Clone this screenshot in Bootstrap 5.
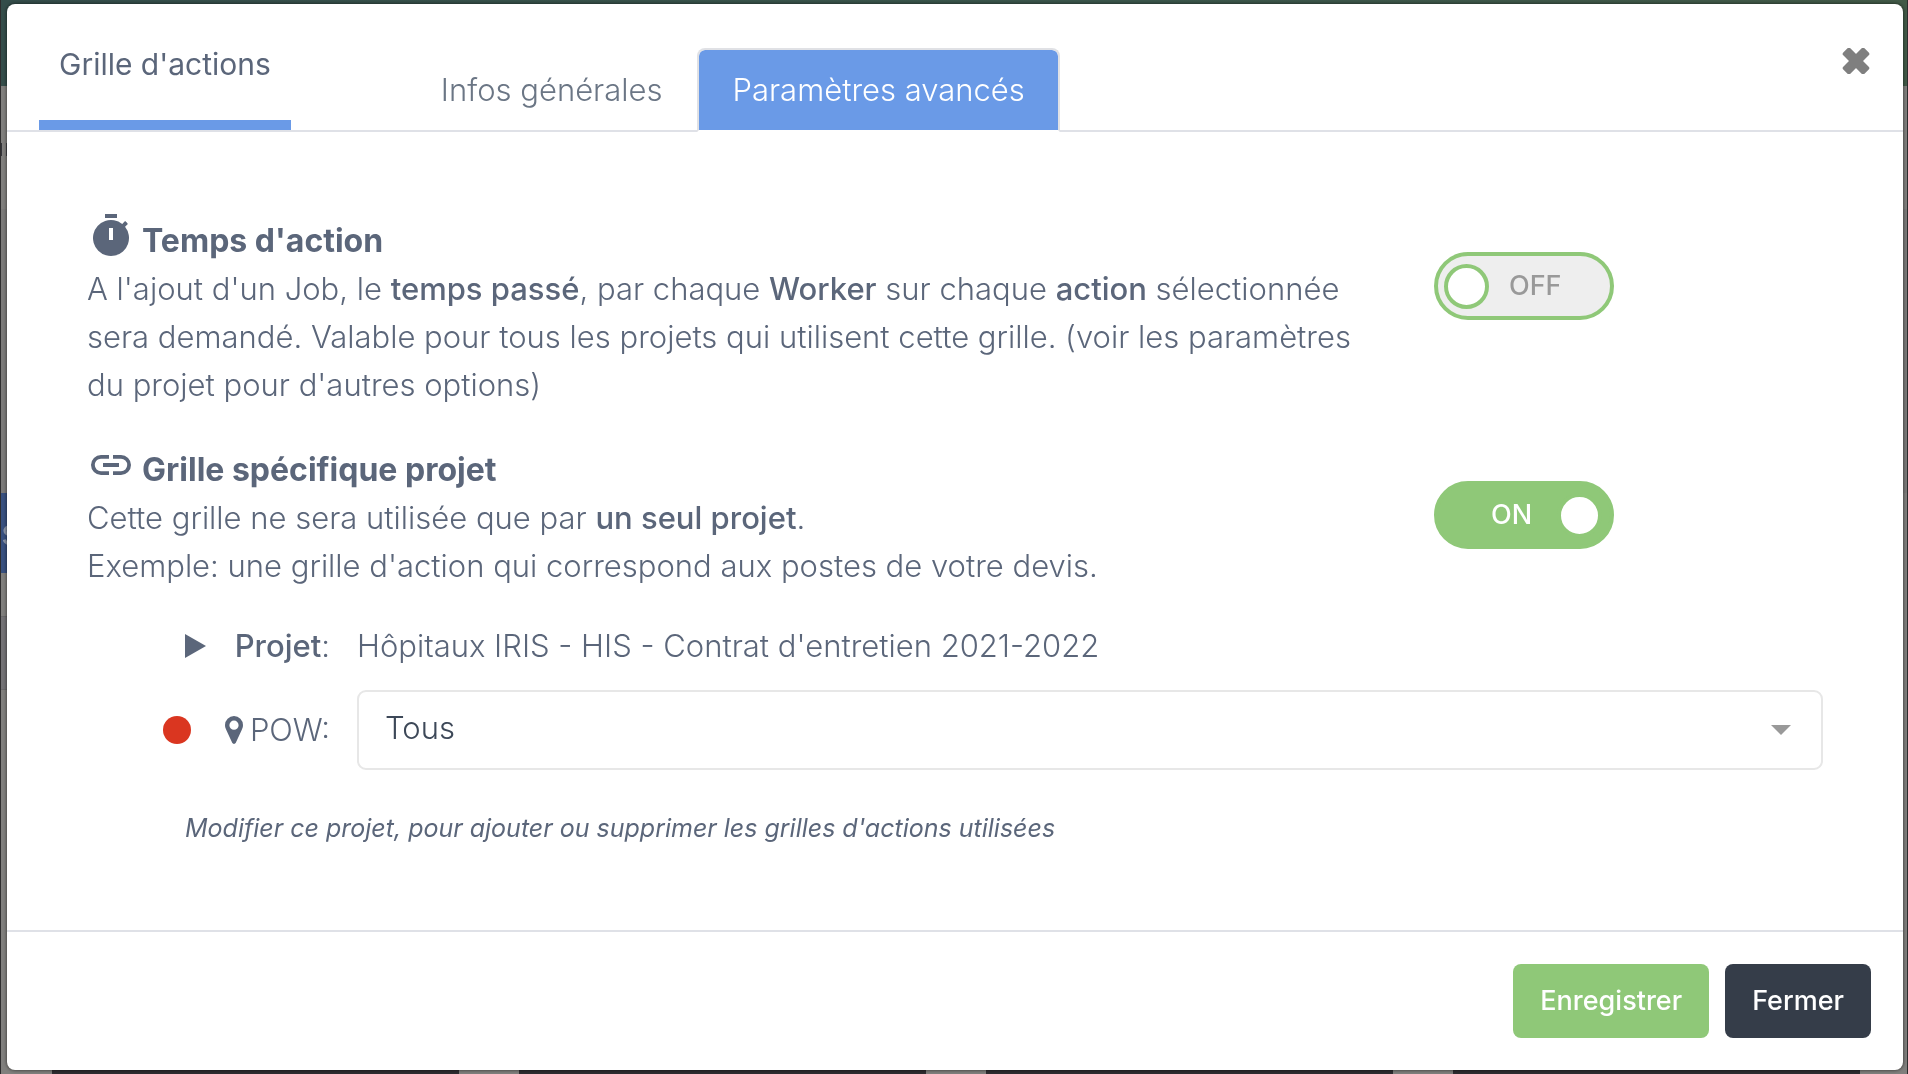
<!DOCTYPE html>
<html lang="fr">
<head>
<meta charset="utf-8">
<meta name="viewport" content="width=device-width, initial-scale=1">
<title>Grille d'actions</title>
<link href="https://cdn.jsdelivr.net/npm/bootstrap@5.3.0/dist/css/bootstrap.min.css" rel="stylesheet">
<style>
  :root { --ink: #5b667a; --blue: #6a9ae7; --green: #8fc878; --dark: #353d49; --rule: #dfe1e7; }
  body { font-family: Inter, "Liberation Sans", sans-serif; font-size: 31px; font-weight: 300; line-height: 48px; color: var(--ink); background: #807f7d; }

  /* dimmed page behind the dialog */
  .backdrop-page { position: fixed; inset: 0; z-index: -1; overflow: hidden; border: solid #2e2d2e; border-width: 0 1px; }
  .page-top { height: 86px; background: linear-gradient(90deg, #344d4a, #3b564b 60%, #425a47); }
  .page-title { height: 123px; }
  .page-mark { width: 8px; height: 13px; margin-top: 57px; background: linear-gradient(90deg, #33343a 1px, transparent 1px 5px, #44454a 5px); }
  .page-space { height: 284px; background: #7b7a79; }
  .page-blue { height: 80px; width: 50%; font-size: 36px; font-weight: 400; line-height: 78px; background: #38507f; color: #8b95a8; }
  .page-row { height: 74px; margin-top: 43px; width: 50%; background: #737275; border: solid #6a696b; border-width: 1px 0; }
  .page-tiles { position: absolute; inset: auto 0 0 51px; height: 10px; background: repeating-linear-gradient(90deg, #2e2c30 0 407px, transparent 407px 467px); }

  .dialog-frame { min-height: 100vh; padding: 4px 5px 4px 7px; }
  .dialog-box { border: 0; border-radius: 8px; color: inherit; background: #fff; box-shadow: 0 0 3px 1px rgba(0,0,0,.4); }
  .dialog-head { border-bottom: 2px solid var(--rule); padding: 36px 32px 0; height: 128px; }
  .dialog-title { font-size: 30px; font-weight: 400; line-height: 48px; padding: 0 20px 32px; border-bottom: 10px solid var(--blue); }
  .dialog-tabs { border: 0; margin: 8px 0 -2px 115px; align-self: flex-start; }
  .dialog-tabs .nav-link { padding: 16px 33px; border: 2px solid transparent; border-radius: 8px 8px 0 0; color: #6b7685; margin: 0; line-height: 48px; background-clip: padding-box; }
  .dialog-tabs .nav-link.active { color: #fff; background-color: var(--blue); border-color: #e0e1e5; border-bottom-color: #fff; }
  .close-btn { border: 0; background: none; padding: 0; line-height: 0; margin-top: 8px; color: #7f7f7f; }

  .dialog-main { padding: 85px 80px 40px; }
  .option-row { display: grid; grid-template-columns: 1fr 389px; column-gap: 66px; }
  .option-row + .option-row { margin-top: 37px; }
  .option-row h2 { display: flex; align-items: flex-start; gap: 7px; height: 48px; margin: 0; font-size: 32px; font-weight: 700; line-height: 48px; }
  .option-row h2 svg { margin-top: -5px; flex: none; }
  .option-row p { margin: 0; }
  b { font-weight: 500; }

  .toggle { display: flex; align-items: center; width: 180px; height: 68px; margin-top: 35px; padding: 0 6px; border: 4px solid var(--green); border-radius: 34px; background: #eee; color: #999; font-size: 27px; font-weight: 500; }
  .toggle input { appearance: none; width: 45px; height: 45px; margin: 0; border: 4px solid var(--green); border-radius: 50%; background: #fff; }
  .toggle .state { margin-left: 20px; }
  .toggle.is-on { flex-direction: row-reverse; justify-content: space-between; padding-right: 8px; background: var(--green); color: #fff; }
  .toggle.is-on .state { margin-left: 47px; }

  .project-grid { display: grid; grid-template-columns: 119px 124px 1fr; row-gap: 20px; align-items: center; margin-top: 32px; }
  .project-grid .value { margin-left: 27px; }
  .marker, .field-name { display: flex; justify-content: flex-end; align-items: center; }
  .field-name { gap: 7px; }
  .red-dot { width: 28px; height: 28px; margin-right: 15px; border-radius: 50%; background: #da3620; }
  .pow-select { width: auto; height: 80px; padding: 0 26px 3px; border: 2px solid #e7e7e7; border-radius: 9px; color: #3d4858; font-size: 31px; font-weight: 300; background: #fff url("data:image/svg+xml,%3Csvg xmlns='http://www.w3.org/2000/svg' viewBox='0 0 20 10'%3E%3Cpath fill='%23999' d='M0 0h20L10 10z'/%3E%3C/svg%3E") no-repeat right 30px center / 20px 10px; }
  .hint { margin: 34px 0 0 98px; font-size: 25px; font-weight: 400; font-style: italic; }

  .dialog-foot { border-top: 2px solid var(--rule); padding: 32px; gap: 16px; }
  .dialog-foot .btn { margin: 0; padding: 13px 27px; border: 0; border-radius: 8px; color: #fff; font-size: 27px; font-weight: 500; line-height: 48px; }
  .dialog-foot .btn-save { background: var(--green); }
  .dialog-foot .btn-shut { background: var(--dark); }
</style>
</head>
<body>
<div class="backdrop-page" aria-hidden="true">
  <div class="page-top"></div>
  <div class="page-title d-flex"><div class="page-mark"></div></div>
  <div class="page-space"></div>
  <div class="page-blue">s</div>
  <div class="page-row"></div>
  <div class="page-tiles"></div>
</div>

<div class="dialog-frame d-flex">
  <div class="dialog-box modal-content flex-grow-1" role="dialog" aria-labelledby="dlgTitle">
    <header class="dialog-head d-flex">
      <h1 class="dialog-title m-0" id="dlgTitle">Grille d'actions</h1>
      <ul class="nav nav-tabs dialog-tabs flex-nowrap text-nowrap">
        <li class="nav-item"><a class="nav-link" href="#infos">Infos générales</a></li>
        <li class="nav-item"><a class="nav-link active" href="#params" aria-current="page">Paramètres avancés</a></li>
      </ul>
      <button type="button" class="close-btn ms-auto align-self-start" aria-label="Fermer la fenêtre">
        <svg width="30" height="26" viewBox="0 0 30 26" fill="currentColor"><g transform="rotate(45 15 13)"><rect x="0" y="8" width="30" height="10" rx="2"/><rect x="10" y="-2" width="10" height="30" rx="2"/></g></svg>
      </button>
    </header>

    <main class="dialog-main flex-grow-1">
      <section class="option-row">
        <div>
          <h2>
            <svg width="48" height="48" viewBox="0 0 24 24" fill="currentColor"><path d="M9 1h6v2H9zM19.03 7.39l1.42-1.42a11 11 0 0 0-1.41-1.41l-1.42 1.42A9 9 0 1 0 19.03 7.39zM13 14h-2V8h2z"/></svg>
            Temps d'action
          </h2>
          <p>A l'ajout d'un Job, le <b>temps passé</b>, par chaque <b>Worker</b> sur chaque <b>action</b> sélectionnée sera demandé. Valable pour tous les projets qui utilisent cette grille. (voir les paramètres du projet pour d'autres options)</p>
        </div>
        <div>
          <label class="toggle"><input type="checkbox" role="switch" aria-label="Temps d'action"><span class="state">OFF</span></label>
        </div>
      </section>

      <section class="option-row">
        <div>
          <h2>
            <svg width="48" height="48" viewBox="0 0 24 24" fill="currentColor"><path d="M3.9 12c0-1.71 1.39-3.1 3.1-3.1h4V7H7a5 5 0 0 0 0 10h4v-1.9H7A3.1 3.1 0 0 1 3.900 12zM8 13h8v-2H8zM17 7h-4v1.9h4a3.1 3.1 0 0 1 0 6.200h-4V17h4a5 5 0 0 0 0-10z"/></svg>
            Grille spécifique projet
          </h2>
          <p>Cette grille ne sera utilisée que par <b>un seul projet</b>.<br>Exemple: une grille d'action qui correspond aux postes de votre devis.</p>
        </div>
        <div>
          <label class="toggle is-on"><input type="checkbox" role="switch" aria-label="Grille spécifique projet" checked><span class="state">ON</span></label>
        </div>
      </section>

      <div class="project-grid">
        <div class="marker"><svg width="21" height="24" viewBox="0 0 21 24"><path d="M0 0l21 12L0 24z" fill="currentColor"/></svg></div>
        <div class="field-name"><span><b>Projet</b>:</span></div>
        <div class="value">Hôpitaux IRIS - HIS - Contrat d'entretien 2021-2022</div>

        <div class="marker"><span class="red-dot"></span></div>
        <label class="field-name" for="pow">
          <svg width="18" height="28" viewBox="0 0 18 28" fill="currentColor" fill-rule="evenodd"><path d="M9 0a9 9 0 0 1 9 9c0 2-.6 3.4-1.3 5L10.800 26.800a2 2 0 0 1-3.600 0L1.300 14C.6 12.400 0 11 0 9a9 9 0 0 1 9-9zM9 4.600a4.600 4.600 0 1 0 0 9.200 4.600 4.600 0 0 0 0-9.200z"/></svg>
          POW:
        </label>
        <select class="form-select value pow-select" id="pow"><option>Tous</option></select>
      </div>

      <p class="hint">Modifier ce projet, pour ajouter ou supprimer les grilles d'actions utilisées</p>
    </main>

    <footer class="dialog-foot d-flex justify-content-end">
      <button type="button" class="btn btn-save">Enregistrer</button>
      <button type="button" class="btn btn-shut">Fermer</button>
    </footer>
  </div>
</div>
<script src="https://cdn.jsdelivr.net/npm/bootstrap@5.3.0/dist/js/bootstrap.bundle.min.js"></script>
</body>
</html>
